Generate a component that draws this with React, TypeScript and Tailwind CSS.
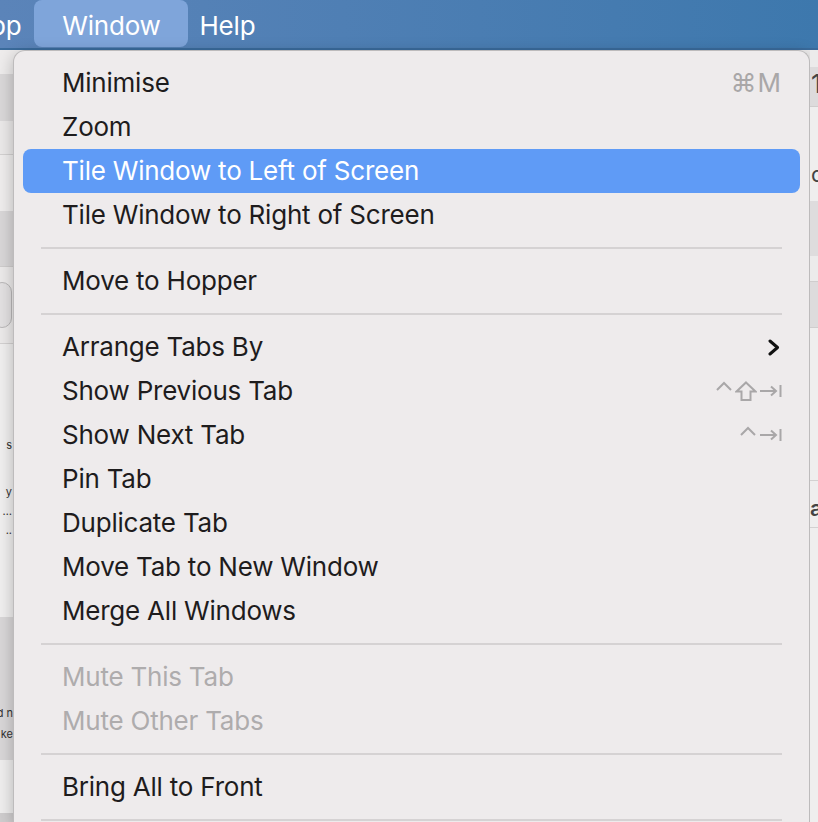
import type { ReactNode } from 'react';

type Item =
  | { kind: 'item'; label: string; shortcut?: ReactNode; active?: boolean; disabled?: boolean; submenu?: boolean }
  | { kind: 'sep' };

const gray = '#a9a7a8';

function Caret() {
  return (
    <svg width="16" height="10" viewBox="0 0 16 10" fill="none" stroke={gray} strokeWidth="2">
      <polyline points="1,9 8,2 15,9" />
    </svg>
  );
}

function Shift() {
  return (
    <svg width="22" height="20" viewBox="0 0 22 20" fill="none" stroke={gray} strokeWidth="2" strokeLinejoin="miter">
      <path d="M11 1.5 L20.5 10.5 L15.5 10.5 L15.5 19 L6.5 19 L6.5 10.5 L1.5 10.5 Z" />
    </svg>
  );
}

function TabKey() {
  return (
    <svg width="22" height="12" viewBox="0 0 22 12" fill="none" stroke={gray} strokeWidth="2">
      <line x1="0" y1="6" x2="16" y2="6" />
      <polyline points="11,1.5 16,6 11,10.5" />
      <line x1="20.5" y1="0" x2="20.5" y2="12" />
    </svg>
  );
}

function Chevron() {
  return (
    <svg width="12" height="17" viewBox="0 0 12 17" fill="none" stroke="#111" strokeWidth="3" strokeLinecap="round" strokeLinejoin="round">
      <polyline points="2,2 9.5,8.5 2,15" />
    </svg>
  );
}

const items: Item[] = [
  { kind: 'item', label: 'Minimise', shortcut: <span className="text-[#a9a7a8] tracking-[1px]">⌘M</span> },
  { kind: 'item', label: 'Zoom' },
  { kind: 'item', label: 'Tile Window to Left of Screen', active: true },
  { kind: 'item', label: 'Tile Window to Right of Screen' },
  { kind: 'sep' },
  { kind: 'item', label: 'Move to Hopper' },
  { kind: 'sep' },
  { kind: 'item', label: 'Arrange Tabs By', submenu: true },
  {
    kind: 'item',
    label: 'Show Previous Tab',
    shortcut: (
      <span className="flex items-center gap-[3px]">
        <span className="-mt-[10px]"><Caret /></span>
        <Shift />
        <TabKey />
      </span>
    ),
  },
  {
    kind: 'item',
    label: 'Show Next Tab',
    shortcut: (
      <span className="flex items-center gap-[4px]">
        <span className="-mt-[8px]"><Caret /></span>
        <TabKey />
      </span>
    ),
  },
  { kind: 'item', label: 'Pin Tab' },
  { kind: 'item', label: 'Duplicate Tab' },
  { kind: 'item', label: 'Move Tab to New Window' },
  { kind: 'item', label: 'Merge All Windows' },
  { kind: 'sep' },
  { kind: 'item', label: 'Mute This Tab', disabled: true },
  { kind: 'item', label: 'Mute Other Tabs', disabled: true },
  { kind: 'sep' },
  { kind: 'item', label: 'Bring All to Front' },
  { kind: 'sep' },
];

function MenuBar() {
  return (
    <div className="h-[50px] shrink-0 flex items-stretch bg-gradient-to-r from-[#5b84b9] to-[#3d78ad] border-b-[2px] border-[#3a6b9c] text-white text-[26px] tracking-[-0.2px]">
      <div className="-ml-[10px] pt-[6px] pr-[13px]">pp</div>
      <div className="w-[154px] h-[47px] rounded-[8px] bg-[#7fa5da] flex justify-center pt-[6px]">Window</div>
      <div className="pl-[11px] pt-[6px]">Help</div>
    </div>
  );
}

function LeftStrip() {
  return (
    <div className="w-[13px] shrink-0 flex flex-col overflow-hidden text-[11px] text-[#333] leading-none">
      <div className="h-[24px] bg-[#eeecec]" />
      <div className="h-[47px] bg-[#dad8d9]" />
      <div className="h-[34px] bg-[#ebe9e9] border-b border-[#d3d1d1]" />
      <div className="h-[56px] bg-[#efeded]" />
      <div className="h-[56px] bg-[#d9d7d8] border-b border-[#cfcdcd]" />
      <div className="h-[77px] bg-[#eceaea] border-b border-[#d3d1d1] flex items-center">
        <div className="h-[46px] w-[20px] -ml-[8px] rounded-[10px] border border-[#b9b7b8] bg-[#e3e1e2]" />
      </div>
      <div className="h-[273px] bg-[#f0efef] flex flex-col items-end pt-[96px] gap-[8px] pr-[1px]">
        <div>s</div>
        <div className="mt-[28px]">y</div>
        <div>…</div>
        <div>..</div>
      </div>
      <div className="h-[143px] bg-[#d9d7d8] flex flex-col items-end justify-end pb-[20px] gap-[10px] whitespace-nowrap">
        <div>d n</div>
        <div>ke</div>
      </div>
      <div className="h-[53px] bg-[#efeeee]" />
      <div className="flex-1 bg-[#cfcdce]" />
    </div>
  );
}

function RightStrip() {
  return (
    <div className="w-[8px] shrink-0 flex flex-col overflow-hidden text-[26px] text-[#444] leading-none">
      <div className="h-[17px] bg-[#ecebeb]" />
      <div className="h-[40px] bg-[#dddbdc] border-b border-[#cfcdcd] pt-[4px] pl-[1px]">1</div>
      <div className="h-[94px] bg-[#efeeee] pt-[56px] pl-[1px] text-[22px]">q</div>
      <div className="h-[55px] bg-[#dedcdd]" />
      <div className="h-[25px] bg-[#ecebeb]" />
      <div className="h-[47px] bg-[#dddbdc] border-y border-[#cfcdcd]" />
      <div className="h-[153px] bg-[#efeeee] border-b border-[#d3d1d1]" />
      <div className="h-[47px] bg-[#efeeee] border-b border-[#d3d1d1] pt-[16px] text-[22px] font-semibold">a</div>
      <div className="flex-1 bg-[#efeeee]" />
    </div>
  );
}

function Menu() {
  return (
    <div className="flex-1 bg-[#eeebec] rounded-t-[12px] border-l border-t border-r border-[#bdbbbc] shadow-[0_4px_16px_rgba(0,0,0,0.25)] pt-[10px] px-[9px] text-[26px] tracking-[-0.22px] leading-none">
      {items.map((it, i) =>
        it.kind === 'sep' ? (
          <div key={i} className="h-[22px] flex items-center px-[18px]">
            <div className="h-[2px] w-full bg-[#d5d2d3]" />
          </div>
        ) : (
          <div
            key={i}
            className={
              'h-[44px] rounded-[8px] flex items-center pl-[39px] pr-[18px] ' +
              (it.active ? 'bg-[#5f9bf6] text-white' : it.disabled ? 'text-[#aeacad]' : 'text-[#1e1c1d]')
            }
          >
            <span className="flex-1">{it.label}</span>
            {it.submenu ? <span className="pr-[2px]"><Chevron /></span> : it.shortcut}
          </div>
        )
      )}
    </div>
  );
}

export default function App() {
  return (
    <div className="w-[818px] h-[822px] overflow-hidden flex flex-col bg-[#eeebec] font-['Inter',sans-serif]">
      <MenuBar />
      <div className="flex flex-1 min-h-0 bg-[#eeecec]">
        <LeftStrip />
        <Menu />
        <RightStrip />
      </div>
    </div>
  );
}
